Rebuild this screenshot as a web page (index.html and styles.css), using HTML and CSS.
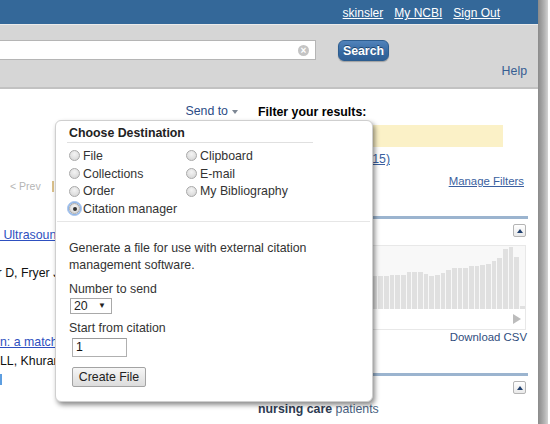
FILE: index.html
```html
<!DOCTYPE html>
<html>
<head>
<meta charset="utf-8">
<link rel="stylesheet" href="styles.css">
</head>
<body>
<div class="frame">
  <div class="page">
    <header class="topbar">
      <a href="#">skinsler</a>
      <a href="#">My NCBI</a>
      <a href="#">Sign Out</a>
    </header>
    <div class="searchbar">
      <div class="search-row">
        <div class="search-input"><span class="clear">×</span></div>
        <button class="search-btn">Search</button>
      </div>
      <div class="help-row"><a class="help" href="#">Help</a></div>
    </div>
    <div class="content">
      <div class="results">
        <div class="sendto-row"><span class="sendto">Send to</span><span class="caret"></span></div>
        <div class="pager"><span class="prev">&lt; Prev</span><span class="pagebox"></span></div>
        <div class="clip r-title1"><a href="#">&nbsp;Ultrasound</a></div>
        <div class="clip r-author1"><span class="shift">Kinsler D, Fryer J</span></div>
        <div class="clip r-title2"><a href="#">n: a match</a></div>
        <div class="clip r-author2">LL, Khurana</div>
        <div class="r-mark"></div>
      </div>
      <aside class="sidebar">
        <div class="filter-title">Filter your results:</div>
        <div class="filter-box"></div>
        <div class="filter-count"><a href="#">(15)</a></div>
        <div class="manage"><a href="#">Manage Filters</a></div>
        <div class="panel-bar"></div>
        <div class="panel-head"><span class="collapse"></span></div>
        <div class="chart">
          <div class="plot">
            <span class="bar" style="height:28px"></span>
            <span class="bar" style="height:30px"></span>
            <span class="bar" style="height:27px"></span>
            <span class="bar" style="height:29px"></span>
            <span class="bar" style="height:31px"></span>
            <span class="bar" style="height:30px"></span>
            <span class="bar" style="height:28px"></span>
            <span class="bar" style="height:32px"></span>
            <span class="bar" style="height:30px"></span>
            <span class="bar" style="height:31px"></span>
            <span class="bar" style="height:29px"></span>
            <span class="bar" style="height:32px"></span>
            <span class="bar" style="height:33px"></span>
            <span class="bar" style="height:31px"></span>
            <span class="bar" style="height:30px"></span>
            <span class="bar" style="height:32px"></span>
            <span class="bar" style="height:33px"></span>
            <span class="bar" style="height:32px"></span>
            <span class="bar" style="height:34px"></span>
            <span class="bar" style="height:33px"></span>
            <span class="bar" style="height:33px"></span>
            <span class="bar" style="height:33px"></span>
            <span class="bar" style="height:34px"></span>
            <span class="bar" style="height:34px"></span>
            <span class="bar" style="height:34px"></span>
            <span class="bar" style="height:37px"></span>
            <span class="bar" style="height:37px"></span>
            <span class="bar" style="height:37px"></span>
            <span class="bar" style="height:35px"></span>
            <span class="bar" style="height:33px"></span>
            <span class="bar" style="height:34px"></span>
            <span class="bar" style="height:36px"></span>
            <span class="bar" style="height:39px"></span>
            <span class="bar" style="height:41px"></span>
            <span class="bar" style="height:41px"></span>
            <span class="bar" style="height:41px"></span>
            <span class="bar" style="height:43px"></span>
            <span class="bar" style="height:43px"></span>
            <span class="bar" style="height:44px"></span>
            <span class="bar" style="height:45px"></span>
            <span class="bar" style="height:48px"></span>
            <span class="bar" style="height:51px"></span>
            <span class="bar" style="height:60px"></span>
            <span class="bar" style="height:62px"></span>
            <span class="bar" style="height:52px"></span>
            <span class="bar" style="height:3px"></span>
          </div>
          <div class="chart-foot"><span class="next-arrow"></span></div>
        </div>
        <div class="csv"><a href="#">Download CSV</a></div>
        <div class="panel-bar bar2"></div>
        <div class="panel-head"><span class="collapse"></span></div>
        <div class="terms"><b>nursing care</b> patients</div>
      </aside>
    </div>
  </div>
  <div class="edge"></div>

  <div class="popup">
    <div class="popup-title">Choose Destination</div>
    <div class="dest-grid">
      <label class="dest"><span class="radio"></span>File</label>
      <label class="dest"><span class="radio"></span>Clipboard</label>
      <label class="dest"><span class="radio"></span>Collections</label>
      <label class="dest"><span class="radio"></span>E-mail</label>
      <label class="dest"><span class="radio"></span>Order</label>
      <label class="dest"><span class="radio"></span>My Bibliography</label>
      <label class="dest"><span class="radio checked"></span>Citation manager</label>
    </div>
    <div class="popup-sep"></div>
    <div class="popup-body">
      <p class="desc">Generate a file for use with external citation<br>management software.</p>
      <div class="field-label">Number to send</div>
      <div class="select"><span>20</span><span class="sel-arrow">▼</span></div>
      <div class="field-label second">Start from citation</div>
      <div class="text-input">1</div>
      <button class="create-btn">Create File</button>
    </div>
  </div>
</div>
</body>
</html>
```

FILE: styles.css
```css
html, body {
  margin: 0;
  padding: 0;
  background: #fff;
}
body {
  width: 550px;
  height: 424px;
  overflow: hidden;
  font-family: "Liberation Sans", Arial, sans-serif;
  font-size: 12.35px;
  color: #000;
}
a { color: inherit; }

.frame {
  position: relative;
  display: flex;
  width: 550px;
  height: 424px;
  overflow: hidden;
}
.page {
  width: 538px;
  flex: none;
}
.edge {
  width: 10px;
  flex: none;
  background: linear-gradient(to right, #8a8a8a 0%, #9c9c9c 30%, #b4b4b4 65%, #d2d2d2 100%);
}

/* top bar */
.topbar {
  height: 22px;
  padding-top: 2px;
  background: #346899;
  display: flex;
  justify-content: flex-end;
  align-items: center;
  gap: 11px;
  padding-right: 38px;
  font-size: 12px;
}
.topbar a {
  color: #fff;
  text-decoration: underline;
}

/* search bar */
.searchbar {
  height: 62px;
  background: #d6d6d6;
  border-top: 1px solid #ebebeb;
  border-bottom: 2px solid #c2c2c2;
}
.search-row {
  display: flex;
  align-items: flex-start;
  padding-top: 15px;
  gap: 22px;
}
.search-input {
  box-sizing: border-box;
  width: 318px;
  height: 20px;
  margin-left: -2px;
  background: #fff;
  border: 1px solid #b5b5b5;
  display: flex;
  justify-content: flex-end;
  align-items: center;
  padding-right: 6px;
}
.clear {
  width: 11px;
  height: 11px;
  border-radius: 50%;
  background: #c4c4c4;
  color: #fff;
  font-size: 10px;
  line-height: 11px;
  text-align: center;
  font-weight: bold;
}
.search-btn {
  box-sizing: border-box;
  width: 51px;
  height: 21px;
  padding: 0;
  border: 1px solid #2d5d8f;
  border-radius: 6px;
  background: linear-gradient(#5183bb, #3568a0 60%, #2f5f94);
  color: #fff;
  font-family: "Liberation Sans", Arial, sans-serif;
  font-size: 12.35px;
  font-weight: bold;
  text-shadow: 0 -1px 0 #1e436c;
  box-shadow: 0 1px 1px rgba(0,0,0,0.25);
}
.help-row {
  display: flex;
  justify-content: flex-end;
  padding-right: 11px;
  margin-top: 2px;
  line-height: 16px;
}
.help {
  color: #375d92;
  text-decoration: none;
}

/* content */
.content {
  display: flex;
  gap: 8px;
}
.results {
  width: 250px;
  flex: none;
  line-height: 16px;
}
.sendto-row {
  display: flex;
  justify-content: flex-end;
  align-items: center;
  gap: 4px;
  padding-top: 14px;
  padding-right: 12px;
  height: 16px;
}
.sendto {
  color: #2b4c86;
}
.caret {
  width: 0;
  height: 0;
  border-left: 3.5px solid transparent;
  border-right: 3.5px solid transparent;
  border-top: 4px solid #7d8794;
  margin-top: 2px;
}
.pager {
  margin-top: 59px;
  display: flex;
  align-items: center;
  padding-left: 10px;
  height: 16px;
}
.prev {
  font-size: 10.5px;
  color: #b5b5b5;
}
.pagebox {
  margin-left: 11px;
  width: 4px;
  height: 11px;
  border-left: 2px solid #dcc28c;
}
.clip {
  width: 58px;
  overflow: hidden;
  white-space: nowrap;
}
.r-title1 a, .r-title2 a {
  color: #2e50c0;
  text-decoration: underline;
}
.r-title1 { margin-top: 33px; }
.r-author1 {
  margin-top: 22px;
  color: #111;
}
.shift {
  display: inline-block;
  margin-left: -36px;
}
.r-title2 {
  margin-top: 53px;
}
.r-author2 {
  margin-top: 3px;
  color: #111;
}
.r-mark {
  margin-top: 5px;
  width: 2px;
  height: 11px;
  background: #5d9ee0;
}

/* sidebar */
.sidebar {
  width: 270px;
  flex: none;
  line-height: 16px;
}
.filter-title {
  padding-top: 15px;
  font-weight: bold;
}
.filter-box {
  margin-top: 5px;
  width: 245px;
  height: 22px;
  background: #fbf1c7;
}
.filter-count {
  margin-top: 4px;
  width: 132px;
  text-align: right;
}
.filter-count a, .manage a {
  color: #3a5fa0;
  text-decoration: underline;
}
.manage {
  margin-top: 7px;
  text-align: right;
  padding-right: 4px;
  font-size: 11.4px;
  line-height: 15px;
}
.panel-bar {
  margin-top: 27px;
  height: 3px;
  background: #9bb4cf;
}
.panel-head {
  display: flex;
  justify-content: flex-end;
  padding-right: 2px;
  margin-top: 5px;
  height: 13px;
}
.collapse {
  box-sizing: border-box;
  position: relative;
  width: 13px;
  height: 13px;
  border: 1px solid #b4b4b4;
  border-radius: 2px;
  background: linear-gradient(#ffffff, #e9e9e9);
}
.collapse::after {
  content: "";
  position: absolute;
  left: 2.5px;
  top: 3.5px;
  border-left: 3.5px solid transparent;
  border-right: 3.5px solid transparent;
  border-bottom: 4px solid #1f3f6e;
}
.chart {
  margin-top: 8px;
  width: 268px;
  height: 85px;
  box-sizing: border-box;
  border: 1px solid #e8e8e8;
}
.plot {
  height: 63px;
  background: #f8f8f8;
  display: flex;
  justify-content: flex-end;
  align-items: flex-end;
  gap: 1px;
  padding-right: 0.5px;
}
.bar {
  width: 4.67px;
  flex: none;
  background: #e0e0e0;
}
.chart-foot {
  height: 20px;
  display: flex;
  justify-content: flex-end;
  align-items: center;
  padding-right: 4px;
}
.next-arrow {
  width: 0;
  height: 0;
  border-top: 5px solid transparent;
  border-bottom: 5px solid transparent;
  border-left: 8px solid #bcbcbc;
}
.csv {
  text-align: right;
  padding-right: 1px;
  font-size: 11.4px;
  line-height: 14px;
}
.csv a {
  color: #2f4d7d;
  text-decoration: none;
}
.bar2 { margin-top: 29px; }
.terms {
  margin-top: 7px;
  color: #4a5f80;
}
.terms b {
  color: #2e3b52;
}

/* popup */
.popup {
  position: absolute;
  left: 55px;
  top: 120px;
  width: 318px;
  height: 282px;
  box-sizing: border-box;
  background: #fff;
  border: 1px solid #cfcfcf;
  border-radius: 6px;
  box-shadow: 2px 3px 5px rgba(0,0,0,0.45);
  color: #333;
  line-height: 16px;
}
.popup-title {
  margin: 4px 0 0 11px;
  width: 244px;
  padding-left: 2px;
  font-weight: bold;
  color: #222;
  border-bottom: 1px solid #e0e0e0;
  height: 16px;
  padding-bottom: 1px;
}
.dest-grid {
  margin: 4px 0 0 13px;
  display: grid;
  grid-template-columns: 117px auto;
  grid-auto-rows: 17.7px;
}
.dest {
  display: flex;
  align-items: center;
  gap: 3px;
  white-space: nowrap;
}
.radio {
  box-sizing: border-box;
  width: 11px;
  height: 11px;
  border-radius: 50%;
  border: 1px solid #a9a9a9;
  background: radial-gradient(circle at 50% 35%, #f4f4f4, #d2d2d2);
  flex: none;
  position: relative;
}
.radio.checked {
  box-shadow: 0 0 0 1.5px #8fb4e6;
  outline: 1px solid #a9c6ee;
  outline-offset: 1px;
}
.radio.checked::after {
  content: "";
  position: absolute;
  left: 2.5px;
  top: 2.5px;
  width: 4px;
  height: 4px;
  border-radius: 50%;
  background: #333;
}
.popup-sep {
  margin: 3px 2px 0 1px;
  height: 1px;
  background: #e6e6e6;
}
.popup-body {
  padding: 18px 0 0 13px;
  line-height: 17px;
}
.desc {
  margin: 0;
}
.field-label {
  margin-top: 7px;
}
.field-label.second {
  margin-top: 6px;
}
.select {
  box-sizing: border-box;
  margin-left: 1px;
  width: 42px;
  height: 16px;
  border: 1px solid #a9a9a9;
  background: #fff;
  display: flex;
  align-items: center;
  justify-content: space-between;
  padding: 0 5px 0 3px;
  line-height: 14px;
  color: #222;
}
.sel-arrow {
  font-size: 8px;
}
.text-input {
  box-sizing: border-box;
  margin: 1px 0 0 3px;
  width: 55px;
  height: 19px;
  border: 1px solid #b0b0b0;
  border-top-color: #9a9a9a;
  padding-left: 3px;
  line-height: 17px;
  color: #111;
}
.create-btn {
  display: block;
  box-sizing: border-box;
  margin: 10px 0 0 3px;
  width: 74px;
  height: 20px;
  padding: 0;
  border: 1px solid #a3a3a3;
  border-radius: 2px;
  background: linear-gradient(#f6f6f6, #dcdcdc);
  font-family: "Liberation Sans", Arial, sans-serif;
  font-size: 12.35px;
  color: #222;
}
```
